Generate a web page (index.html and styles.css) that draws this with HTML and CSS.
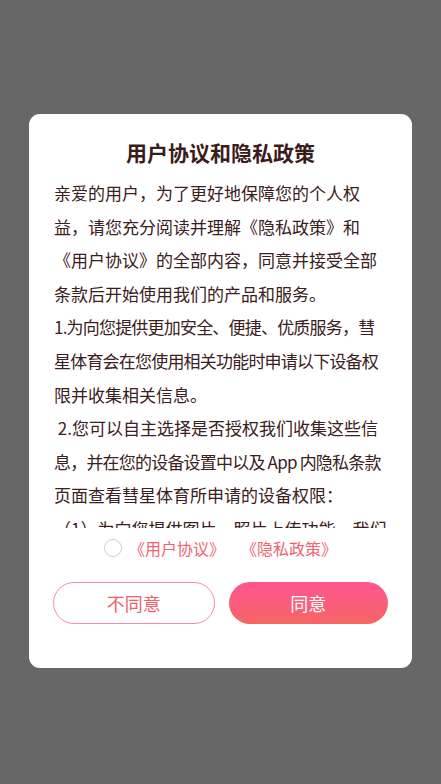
FILE: index.html
```html
<!DOCTYPE html>
<html lang="zh-CN">
<head>
<meta charset="utf-8">
<title>用户协议和隐私政策</title>
<link rel="stylesheet" href="styles.css">
</head>
<body>
<div class="overlay">
  <div class="dialog">
    <div class="title">用户协议和隐私政策</div>
    <div class="content">
      <p>
        <span class="ln">亲爱的用户，为了更好地保障您的个人权</span>
        <span class="ln">益，请您充分阅读并理解《隐私政策》和</span>
        <span class="ln">《用户协议》的全部内容，同意并接受全部</span>
        <span class="ln">条款后开始使用我们的产品和服务。</span>
      </p>
      <p>
        <span class="ln tight">1.为向您提供更加安全、便捷、优质服务，彗</span>
        <span class="ln tight">星体育会在您使用相关功能时申请以下设备权</span>
        <span class="ln">限并收集相关信息。</span>
      </p>
      <p>
        <span class="ln">&nbsp;2.您可以自主选择是否授权我们收集这些信</span>
        <span class="ln tight">息，并在您的设备设置中以及 App 内隐私条款</span>
        <span class="ln">页面查看彗星体育所申请的设备权限：</span>
      </p>
      <p>
        <span class="ln">（1）为向您提供图片、照片上传功能，我们</span>
      </p>
    </div>
    <div class="agree-row">
      <span class="radio"></span>
      <span class="link">《用户协议》</span>
      <span class="link">《隐私政策》</span>
    </div>
    <div class="buttons">
      <div class="btn btn-reject">不同意</div>
      <div class="btn btn-accept">同意</div>
    </div>
  </div>
</div>
</body>
</html>
```

FILE: styles.css
```css
html, body {
  margin: 0;
  padding: 0;
}
body {
  width: 441px;
  height: 784px;
  background: #676767;
  font-family: "Noto Sans CJK SC", "Noto Sans", sans-serif;
  overflow: hidden;
}
.overlay {
  padding-top: 114px;
  padding-left: 29px;
}
.dialog {
  width: 383px;
  height: 554px;
  box-sizing: border-box;
  background: #ffffff;
  border-radius: 11px;
  padding: 24px 25px 0 25px;
  display: flex;
  flex-direction: column;
}
.title {
  height: 28px;
  line-height: 28px;
  text-align: center;
  font-size: 21px;
  font-weight: 700;
  color: #3b1c1c;
}
.content {
  margin-top: 10px;
  height: 352px;
  overflow: hidden;
  font-size: 17px;
  line-height: 33.6px;
  color: #3a2020;
}
.content p {
  margin: 0;
}
.ln {
  display: block;
  white-space: nowrap;
}
.tight {
  letter-spacing: -0.8px;
}
.agree-row {
  margin-top: 8px;
  height: 24px;
  display: flex;
  align-items: center;
  justify-content: center;
  font-size: 16px;
  color: #f0646e;
}
.radio {
  width: 16px;
  height: 16px;
  border: 1.5px solid #dccaca;
  border-radius: 50%;
  margin-right: 7px;
}
.link {
  line-height: 24px;
}
.link + .link {
  margin-left: 16px;
}
.buttons {
  margin-top: 22px;
  display: flex;
  gap: 14px;
}
.btn {
  flex: 1;
  height: 42px;
  border-radius: 21px;
  display: flex;
  align-items: center;
  justify-content: center;
  font-size: 18px;
  box-sizing: border-box;
}
.btn-reject {
  border: 1px solid #fb8aaa;
  color: #f0606a;
  background: #fff;
  margin-left: -1px;
}
.btn-accept {
  background: linear-gradient(180deg, #ff5590 0%, #f46663 100%);
  color: #ffffff;
  margin-right: -1px;
}
```
